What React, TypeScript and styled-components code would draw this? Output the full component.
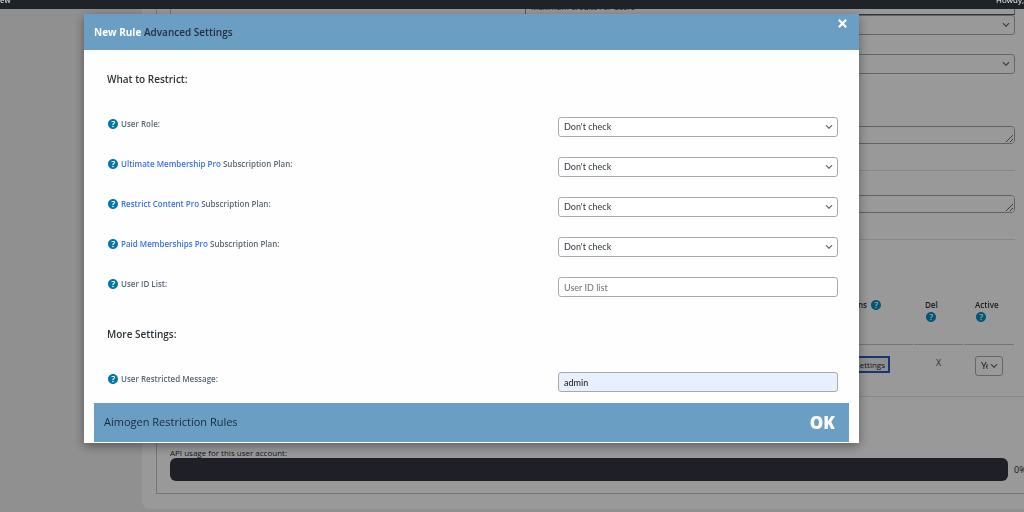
import React from "react";
import styled, { createGlobalStyle, css } from "styled-components";

const GlobalStyle = createGlobalStyle`
  *, *::before, *::after { box-sizing: border-box; }
  body {
    margin: 0;
    background: #f0f0f1;
    color: #1d2327;
    font-family: "Open Sans", "Noto Sans", sans-serif;
    font-size: 8px;
    line-height: 14px;
  }
  button, input, select, textarea { font: inherit; margin: 0; }
`;

const Page = styled.div`
  position: relative;
  min-height: 100vh;
  overflow: hidden;
`;

const AdminBar = styled.header`
  position: relative;
  z-index: 3;
  display: flex;
  align-items: flex-end;
  justify-content: space-between;
  height: 9px;
  padding-bottom: 2px;
  overflow: hidden;
  background: #1d2327;
  color: #f0f0f1;
`;

const Panel = styled.main`
  margin: 0 -16px 0 142px;
  padding: 0 0 15px 14px;
  background: #fff;
  border-radius: 0 0 0 8px;
`;

const Box = styled.section`
  display: flex;
  flex-direction: column;
  padding: 0 24px 12px 13px;
  border: 1px solid #c3c4c7;
  border-top: 0;
`;

const OptionRow = styled.div`
  display: flex;
  justify-content: flex-end;
  height: 6px;
  border-left: 1px solid #c3c4c7;
`;

const OptionLabel = styled.div`
  display: flex;
  align-items: flex-end;
  width: 490px;
  padding: 0 5px;
  overflow: hidden;
  border: 1px solid #8c8f94;
  border-top: 0;
  border-bottom-color: #50575e;
`;

const SelectWrap = styled.div`
  position: relative;
  display: flex;
  min-width: 0;
  svg {
    position: absolute;
    right: 4px;
    top: 5px;
    width: 10px;
    height: 10px;
    pointer-events: none;
    fill: #50575e;
  }
`;

const fieldStyle = css`
  width: 100%;
  height: 20px;
  padding: 0 5px;
  border: 1px solid #a7aaad;
  border-radius: 3px;
  background: #fff;
  color: #3c434a;
  font-family: Lato, "Open Sans", sans-serif;
  font-size: 9px;
  font-weight: 500;
  outline: 0;
`;

const NativeSelect = styled.select`
  ${fieldStyle}
  appearance: none;
`;

const TextInput = styled.input<{ $filled?: boolean }>`
  ${fieldStyle}
  ${(p) => p.$filled && "background: #e8f0fe; color: #1d2327;"}
  &::placeholder { color: #757a80; opacity: 1; }
`;

const Gap = styled.div<{ $size: number }>`
  height: ${(p) => p.$size}px;
`;

const Notes = styled.textarea`
  display: block;
  height: 18px;
  width: 100%;
  border: 1px solid #a0a3a8;
  border-radius: 4px;
  background: #fff;
  resize: vertical;
`;

const Divider = styled.hr`
  width: 100%;
  height: 1px;
  margin: 26px 0 24px;
  border: 0;
  background: #e2e3e5;
`;

const RulesFrame = styled.div`
  margin: 25px -24px 0 0;
  padding-right: 24px;
  border-bottom: 1px solid #e2e3e5;
`;

const RulesTable = styled.table`
  width: 100%;
  table-layout: fixed;
  border-collapse: separate;
  border-spacing: 1px 0;
  th, td { padding: 0; text-align: center; vertical-align: top; }
  th {
    height: 56px;
    padding: 10px 0 0 11px;
    line-height: 12px;
    font-weight: 600;
    text-align: left;
    color: #2c3338;
    border-bottom: 1px solid #c3c4c7;
  }
  td { height: 51px; padding-top: 11px; }
  th:first-child, td:first-child { text-align: right; }
  th:first-child { padding-right: 32px; }
  td:first-child { padding-right: 23px; }
`;

const Col = styled.col<{ $w?: number }>`
  ${(p) => p.$w && `width: ${p.$w}px;`}
`;

const HeadCell = styled.span<{ $stack?: boolean }>`
  display: inline-flex;
  flex-direction: ${(p) => (p.$stack ? "column" : "row")};
  align-items: ${(p) => (p.$stack ? "flex-start" : "center")};
  gap: ${(p) => (p.$stack ? 1 : 4)}px;
  svg { margin-left: ${(p) => (p.$stack ? 1 : 0)}px; fill: #0090c4; }
`;

const SettingsButton = styled.button`
  height: 17px;
  padding: 0 3px;
  border: 2px solid #2a5bc0;
  background: #f0f0f1;
  color: #1d2327;
  line-height: 12px;
`;

const DeleteButton = styled.button`
  padding: 0;
  border: 0;
  background: none;
  color: #50575e;
  font-size: 9px;
`;

const ActiveCell = styled.div`
  width: 28px;
  margin-left: 11px;
  select { padding-right: 14px; }
`;

const Usage = styled.div`
  margin-top: 50px;
  line-height: 11px;
`;

const UsageRow = styled.div`
  display: flex;
  align-items: center;
  gap: 6px;
  margin-right: -24px;
`;

const UsageBar = styled.div`
  flex: 1;
  height: 23px;
  border-radius: 6px;
  background: #343443;
`;

const UsageValue = styled.span`
  width: 25px;
  font-size: 9px;
`;

const Overlay = styled.div`
  position: absolute;
  inset: 0;
  z-index: 2;
  padding: 14px 165px 0 84px;
  background: rgba(0, 0, 0, 0.4);
`;

const Dialog = styled.section`
  padding-bottom: 1px;
  background: #fefefe;
  box-shadow: 0 3px 10px rgba(0, 0, 0, 0.4);
`;

const DialogHead = styled.header`
  display: flex;
  align-items: flex-start;
  justify-content: space-between;
  height: 36px;
  padding: 0 11px 0 10px;
  background: #6a9ec3;
`;

const Title = styled.h2`
  margin: 0;
  font-size: 10px;
  font-weight: 600;
  line-height: 36px;
  color: #25303b;
  span { color: #fff; font-weight: 700; }
`;

const CloseButton = styled.button`
  display: flex;
  margin-top: 4px;
  padding: 0;
  border: 0;
  background: none;
  svg { width: 11px; height: 11px; stroke: #fff; stroke-width: 2.4; }
`;

const DialogBody = styled.form`
  padding: 19px 21px 0 23px;
`;

const Heading = styled.h3`
  margin: 0 0 28px;
  font-size: 10px;
  font-weight: 600;
  line-height: 20px;
  color: #2c3338;
`;

const Rows = styled.div`
  display: flex;
  flex-direction: column;
  gap: 20px;
  & + ${Heading} { margin-top: 27px; }
`;

const Row = styled.div`
  display: grid;
  grid-template-columns: minmax(0, 1fr) 280px;
  align-items: start;
`;

const RowLabel = styled.div`
  display: flex;
  align-items: center;
  gap: 3px;
  padding-left: 1px;
  font-weight: 600;
  color: #5b6676;
  a { color: #3a70e8; text-decoration: none; }
`;

const HelpSvg = styled.svg`
  flex: none;
  width: 10px;
  height: 10px;
  fill: #0077a6;
`;

const DialogFoot = styled.footer`
  display: flex;
  align-items: center;
  justify-content: space-between;
  height: 39px;
  margin: 11px 10px 0;
  padding: 0 14px 0 10px;
  background: #6a9ec3;
`;

const FootTitle = styled.h3`
  margin: 0;
  padding-bottom: 2px;
  font-size: 11px;
  font-weight: 500;
  color: #1b2a3c;
`;

const OkButton = styled.button`
  padding: 0;
  border: 0;
  background: none;
  color: #fff;
  font-size: 17px;
  font-weight: 800;
  line-height: 24px;
`;

const Help = () => (
  <HelpSvg viewBox="3 3 14 14" aria-hidden="true">
    <circle cx="10" cy="10" r="6" fill="#fff" />
    <path d="M17 10c0-3.87-3.14-7-7-7-3.87 0-7 3.13-7 7s3.13 7 7 7c3.86 0 7-3.13 7-7zm-6.3 1.48H9.14v-.43c0-.38.08-.7.24-.98s.46-.57.88-.89c.41-.29.68-.53.81-.71.14-.18.2-.39.2-.62 0-.25-.09-.44-.28-.58-.19-.13-.45-.19-.79-.19-.58 0-1.25.19-2 .57l-.64-1.28c.87-.49 1.8-.74 2.77-.74.81 0 1.45.2 1.92.58.48.39.71.91.71 1.55 0 .43-.09.8-.29 1.11-.19.32-.57.67-1.11 1.06-.38.28-.61.49-.71.63-.1.15-.15.34-.15.57v.35zm-1.47 2.74c-.18-.17-.27-.42-.27-.73 0-.33.08-.58.26-.75s.43-.25.77-.25c.32 0 .57.09.75.26s.27.42.27.74c0 .3-.09.55-.27.72-.18.18-.43.27-.75.27-.33 0-.58-.09-.76-.26z" />
  </HelpSvg>
);

type SelectProps = { id?: string; label?: string; options: string[] };

const Select = ({ id, label, options }: SelectProps) => (
  <SelectWrap>
    <NativeSelect id={id} aria-label={label}>
      {options.map((o) => (
        <option key={o}>{o}</option>
      ))}
    </NativeSelect>
    <svg viewBox="0 0 20 20" aria-hidden="true">
      <path d="M5 6l5 5 5-5 2 1-7 7-7-7 2-1z" />
    </svg>
  </SelectWrap>
);

const restrictions = [
  { id: "role", text: "User Role:" },
  { id: "ump", link: "Ultimate Membership Pro", text: "Subscription Plan:" },
  { id: "rcp", link: "Restrict Content Pro", text: "Subscription Plan:" },
  { id: "pmp", link: "Paid Memberships Pro", text: "Subscription Plan:" },
];

export default function App() {
  return (
    <Page>
      <GlobalStyle />
      <AdminBar>
        <span>ew</span>
        <span>Howdy,</span>
      </AdminBar>

      <Panel>
        <Box>
          <OptionRow>
            <OptionLabel>Maximum Credits For Users</OptionLabel>
          </OptionRow>
          <Select label="Credit type" options={[""]} />
          <Gap $size={19} />
          <Select label="Credit period" options={[""]} />
          <Gap $size={52} />
          <Notes aria-label="Guest message" />
          <Divider />
          <Notes aria-label="Limit message" />
          <Divider />
          <RulesFrame>
            <RulesTable>
              <colgroup>
                <Col />
                <Col $w={49} />
                <Col $w={50} />
              </colgroup>
              <thead>
                <tr>
                  <th><HeadCell>Options <Help /></HeadCell></th>
                  <th><HeadCell $stack>Del <Help /></HeadCell></th>
                  <th><HeadCell $stack>Active <Help /></HeadCell></th>
                </tr>
              </thead>
              <tbody>
                <tr>
                  <td><SettingsButton type="button">Settings</SettingsButton></td>
                  <td><DeleteButton type="button">X</DeleteButton></td>
                  <td>
                    <ActiveCell><Select label="Active" options={["Yes", "No"]} /></ActiveCell>
                  </td>
                </tr>
              </tbody>
            </RulesTable>
          </RulesFrame>
          <Usage>API usage for this user account:</Usage>
          <UsageRow>
            <UsageBar />
            <UsageValue>0%</UsageValue>
          </UsageRow>
        </Box>
      </Panel>

      <Overlay>
        <Dialog role="dialog" aria-labelledby="dialog-title">
          <DialogHead>
            <Title id="dialog-title"><span>New Rule</span> Advanced Settings</Title>
            <CloseButton type="button" aria-label="Close">
              <svg viewBox="0 0 12 12"><path d="M2 2l8 8M10 2l-8 8" /></svg>
            </CloseButton>
          </DialogHead>
          <DialogBody>
            <Heading>What to Restrict:</Heading>
            <Rows>
              {restrictions.map((r) => (
                <Row key={r.id}>
                  <RowLabel>
                    <Help />
                    <label htmlFor={r.id}>
                      {r.link && <><a href="#plan">{r.link}</a>{" "}</>}
                      {r.text}
                    </label>
                  </RowLabel>
                  <Select id={r.id} options={["Don't check"]} />
                </Row>
              ))}
              <Row>
                <RowLabel><Help /><label htmlFor="ids">User ID List:</label></RowLabel>
                <TextInput id="ids" placeholder="User ID list" />
              </Row>
            </Rows>
            <Heading>More Settings:</Heading>
            <Row>
              <RowLabel><Help /><label htmlFor="msg">User Restricted Message:</label></RowLabel>
              <TextInput id="msg" $filled defaultValue="admin" />
            </Row>
          </DialogBody>
          <DialogFoot>
            <FootTitle>Aimogen Restriction Rules</FootTitle>
            <OkButton type="button">OK</OkButton>
          </DialogFoot>
        </Dialog>
      </Overlay>
    </Page>
  );
}
